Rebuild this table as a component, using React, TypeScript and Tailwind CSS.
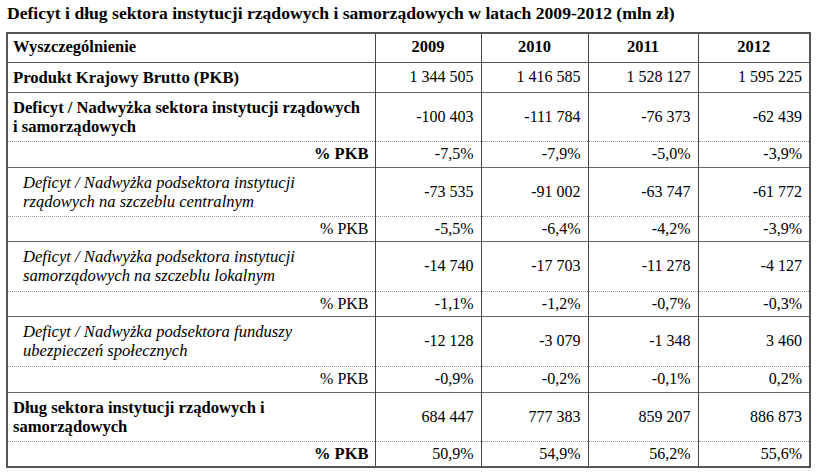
const years = ["2009", "2010", "2011", "2012"];

type Row = {
  label: string[];
  values: string[];
  kind: "bold" | "boldPct" | "italic" | "pct";
  h: string;
  last?: boolean;
};

const rows: Row[] = [
  { label: ["Produkt Krajowy Brutto (PKB)"], values: ["1 344 505", "1 416 585", "1 528 127", "1 595 225"], kind: "bold", h: "h-[30px]" },
  { label: ["Deficyt / Nadwyżka sektora instytucji rządowych", "i samorządowych"], values: ["-100 403", "-111 784", "-76 373", "-62 439"], kind: "bold", h: "h-[49px]" },
  { label: ["% PKB"], values: ["-7,5%", "-7,9%", "-5,0%", "-3,9%"], kind: "boldPct", h: "h-[26px]" },
  { label: ["Deficyt / Nadwyżka podsektora instytucji", "rządowych na szczeblu centralnym"], values: ["-73 535", "-91 002", "-63 747", "-61 772"], kind: "italic", h: "h-[49px]" },
  { label: ["% PKB"], values: ["-5,5%", "-6,4%", "-4,2%", "-3,9%"], kind: "pct", h: "h-[25px]" },
  { label: ["Deficyt / Nadwyżka podsektora instytucji", "samorządowych na szczeblu lokalnym"], values: ["-14 740", "-17 703", "-11 278", "-4 127"], kind: "italic", h: "h-[50px]" },
  { label: ["% PKB"], values: ["-1,1%", "-1,2%", "-0,7%", "-0,3%"], kind: "pct", h: "h-[25px]" },
  { label: ["Deficyt / Nadwyżka podsektora funduszy", "ubezpieczeń społecznych"], values: ["-12 128", "-3 079", "-1 348", "3 460"], kind: "italic", h: "h-[50px]" },
  { label: ["% PKB"], values: ["-0,9%", "-0,2%", "-0,1%", "0,2%"], kind: "pct", h: "h-[26px]" },
  { label: ["Dług sektora instytucji rządowych i", "samorządowych"], values: ["684 447", "777 383", "859 207", "886 873"], kind: "bold", h: "h-[49px]" },
  { label: ["% PKB"], values: ["50,9%", "54,9%", "56,2%", "55,6%"], kind: "boldPct", h: "h-[25px]", last: true },
];

function labelClass(kind: Row["kind"]) {
  if (kind === "bold") return "text-left font-bold pl-[5px] pr-2 leading-[19px] text-[16.6px]";
  if (kind === "boldPct") return "text-right font-bold pr-[6px] text-[16.5px]";
  if (kind === "italic") return "text-left italic pl-[15px] pr-2 leading-[19px] text-[16.6px]";
  return "text-right pr-[6px] text-[16px]";
}

export default function App() {
  return (
    <div className="w-[827px] h-[473px] bg-white text-black [font-family:'Liberation_Serif','Times_New_Roman',serif]">
      <h1 className="pl-[7px] pt-[3px] text-[17.6px] font-bold leading-[20px]">
        Deficyt i dług sektora instytucji rządowych i samorządowych w latach 2009-2012 (mln zł)
      </h1>
      <table className="mt-[9px] ml-[6px] border-collapse border-2 border-[#555] text-[16px] table-fixed w-[803px]">
        <colgroup>
          <col className="w-[368px]" />
          <col className="w-[106px]" />
          <col className="w-[107px]" />
          <col className="w-[110px]" />
          <col className="w-[112px]" />
        </colgroup>
        <thead>
          <tr className="h-[29px] border-b border-[#555]">
            <th className="text-left pl-[5px] font-bold border-r border-[#444] text-[16.5px]">Wyszczególnienie</th>
            {years.map((y) => (
              <th key={y} className="text-center font-bold border-r border-[#444] text-[16.5px]">
                {y}
              </th>
            ))}
          </tr>
        </thead>
        <tbody>
          {rows.map((r, i) => {
            const next = rows[i + 1];
            const dotted = next && (next.kind === "pct" || next.kind === "boldPct");
            return (
              <tr
                key={i}
                className={`${r.h} ${r.last ? "" : dotted ? "border-b border-dotted border-[#999]" : "border-b border-[#666]"}`}
              >
                <td className={`${labelClass(r.kind)} border-r border-[#444] align-middle`}>
                  {r.label.map((l, k) => (
                    <div key={k} className="whitespace-nowrap">
                      {l}
                    </div>
                  ))}
                </td>
                {r.values.map((v, j) => (
                  <td key={j} className="text-right pr-[7px] border-r border-[#444] align-middle">
                    {v}
                  </td>
                ))}
              </tr>
            );
          })}
        </tbody>
      </table>
    </div>
  );
}
